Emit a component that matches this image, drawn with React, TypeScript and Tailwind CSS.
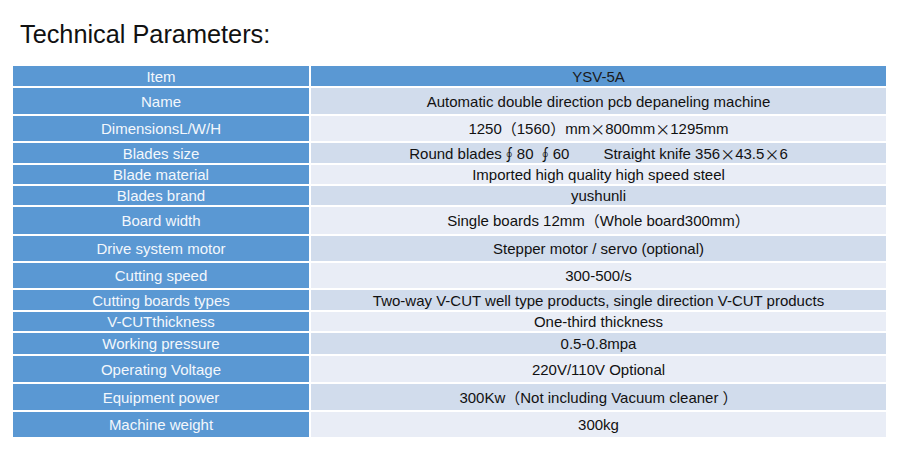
import React from "react";

const CJK = "font-['Noto_Sans_CJK_SC',sans-serif]";

type Row = { label: string; value: React.ReactNode; h: number };

const X = () => <span className={CJK}>×</span>;
const P = ({ children }: { children: React.ReactNode }) => <span className={CJK}>{children}</span>;

const rows: Row[] = [
  { label: "Name", value: "Automatic double direction pcb depaneling machine", h: 26 },
  {
    label: "DimensionsL/W/H",
    value: (
      <>
        1250<P>（</P>1560<P>）</P>mm<X />800mm<X />1295mm
      </>
    ),
    h: 25,
  },
  {
    label: "Blades size",
    value: (
      <>
        Round blades<P>∮</P>80 <P>∮</P>60
        <span className="ml-[34px]">Straight knife 356</span>
        <X />43.5<X />6
      </>
    ),
    h: 20,
  },
  { label: "Blade material", value: "Imported high quality high speed steel", h: 19 },
  { label: "Blades brand", value: "yushunli", h: 19 },
  {
    label: "Board width",
    value: (
      <>
        Single boards 12mm<P>（</P>Whole board300mm<P>）</P>
      </>
    ),
    h: 27,
  },
  { label: "Drive system motor", value: "Stepper motor / servo (optional)", h: 25 },
  { label: "Cutting speed", value: "300-500/s", h: 25 },
  {
    label: "Cutting boards types",
    value: "Two-way V-CUT well type products, single direction V-CUT products",
    h: 20,
  },
  { label: "V-CUTthickness", value: "One-third thickness", h: 19 },
  { label: "Working pressure", value: "0.5-0.8mpa", h: 21 },
  { label: "Operating Voltage", value: "220V/110V Optional", h: 26 },
  {
    label: "Equipment power",
    value: (
      <>
        300Kw<P>（</P>Not including Vacuum cleaner <P>）</P>
      </>
    ),
    h: 26,
  },
  { label: "Machine weight", value: "300kg", h: 25 },
];

export default function App() {
  return (
    <div className="w-[900px] h-[457px] bg-white font-['Liberation_Sans',Arial,sans-serif] overflow-hidden">
      <h1 className="pt-[20px] pl-[20px] text-[25.3px] leading-[29px] text-[#111] font-normal">
        Technical Parameters:
      </h1>
      <div className="mt-[17px] ml-[13px] flex flex-col gap-[2px] w-[873px] text-[15px] leading-[17px]">
        <div className="flex gap-[2px] h-[20px]">
          <div className="w-[296px] bg-[#5a98d3] text-[#f3f7fc] flex items-center justify-center">Item</div>
          <div className="w-[575px] bg-[#5a98d3] text-[#1a1a1a] flex items-center justify-center">YSV-5A</div>
        </div>
        {rows.map((r, i) => (
          <div key={r.label} className="flex gap-[2px]" style={{ height: r.h }}>
            <div className="w-[296px] bg-[#5a98d3] text-[#f3f7fc] flex items-center justify-center whitespace-nowrap">
              {r.label}
            </div>
            <div
              className={`w-[575px] text-[#111] flex items-center justify-center whitespace-pre ${
                i % 2 === 0 ? "bg-[#d1dcec]" : "bg-[#e9edf6]"
              }`}
            >
              {r.value}
            </div>
          </div>
        ))}
      </div>
    </div>
  );
}
